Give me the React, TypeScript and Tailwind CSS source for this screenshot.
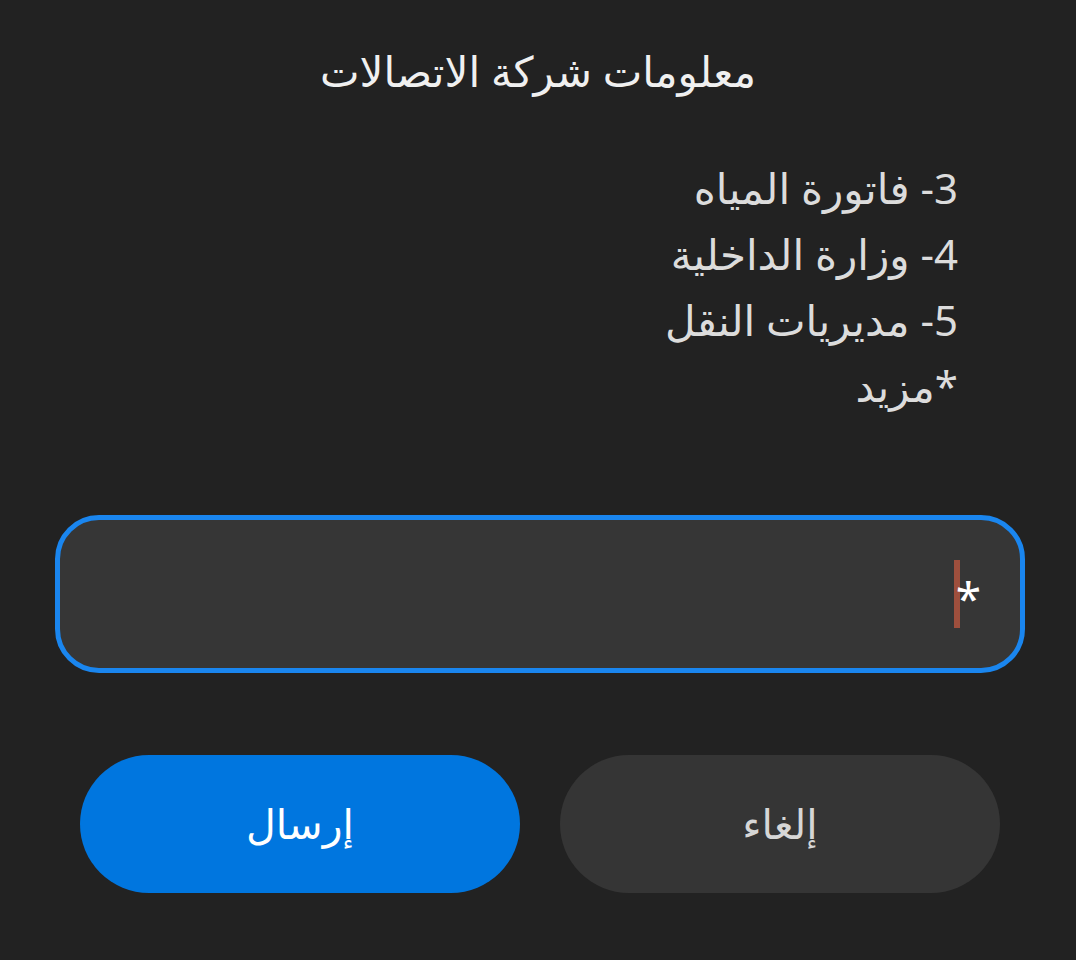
import React from "react";

export default function App() {
  const font = { fontFamily: '"Noto Sans", "DejaVu Sans", sans-serif' };
  return (
    <div
      className="w-[1076px] h-[960px] bg-[#222222] flex flex-col"
      style={font}
    >
      <div className="h-[155px] flex items-start justify-center pt-[43px]">
        <div dir="rtl" className="text-[42px] leading-[56px] text-[#f0f0f0]">
          معلومات شركة الاتصالات
        </div>
      </div>
      <div
        dir="rtl"
        className="flex flex-col items-start pr-[118px] text-[42px] leading-[66px] text-[#dcdcdc]"
      >
        <div>3- فاتورة المياه</div>
        <div>4- وزارة الداخلية</div>
        <div>5- مديريات النقل</div>
        <div>*مزيد</div>
      </div>
      <div className="mt-[96px] pl-[55px] pr-[51px]">
        <div className="h-[158px] rounded-[44px] border-[5px] border-[#1a86ef] bg-[#363636] flex items-center justify-end pr-[39px]">
          <div className="flex items-center">
            <div className="w-[6px] h-[68px] bg-[#9e4f3d]" />
            <span className="text-[46px] leading-none text-white -ml-[4px] mt-[8px]">*</span>
          </div>
        </div>
      </div>
      <div className="mt-[82px] flex gap-[40px] pl-[80px]">
        <button className="shrink-0 w-[440px] h-[138px] rounded-full bg-[#0076df] text-white text-[41px] flex items-center justify-center">
          إرسال
        </button>
        <button className="shrink-0 w-[440px] h-[138px] rounded-full bg-[#353535] text-[#d6d6d6] text-[41px] flex items-center justify-center">
          إلغاء
        </button>
      </div>
    </div>
  );
}
